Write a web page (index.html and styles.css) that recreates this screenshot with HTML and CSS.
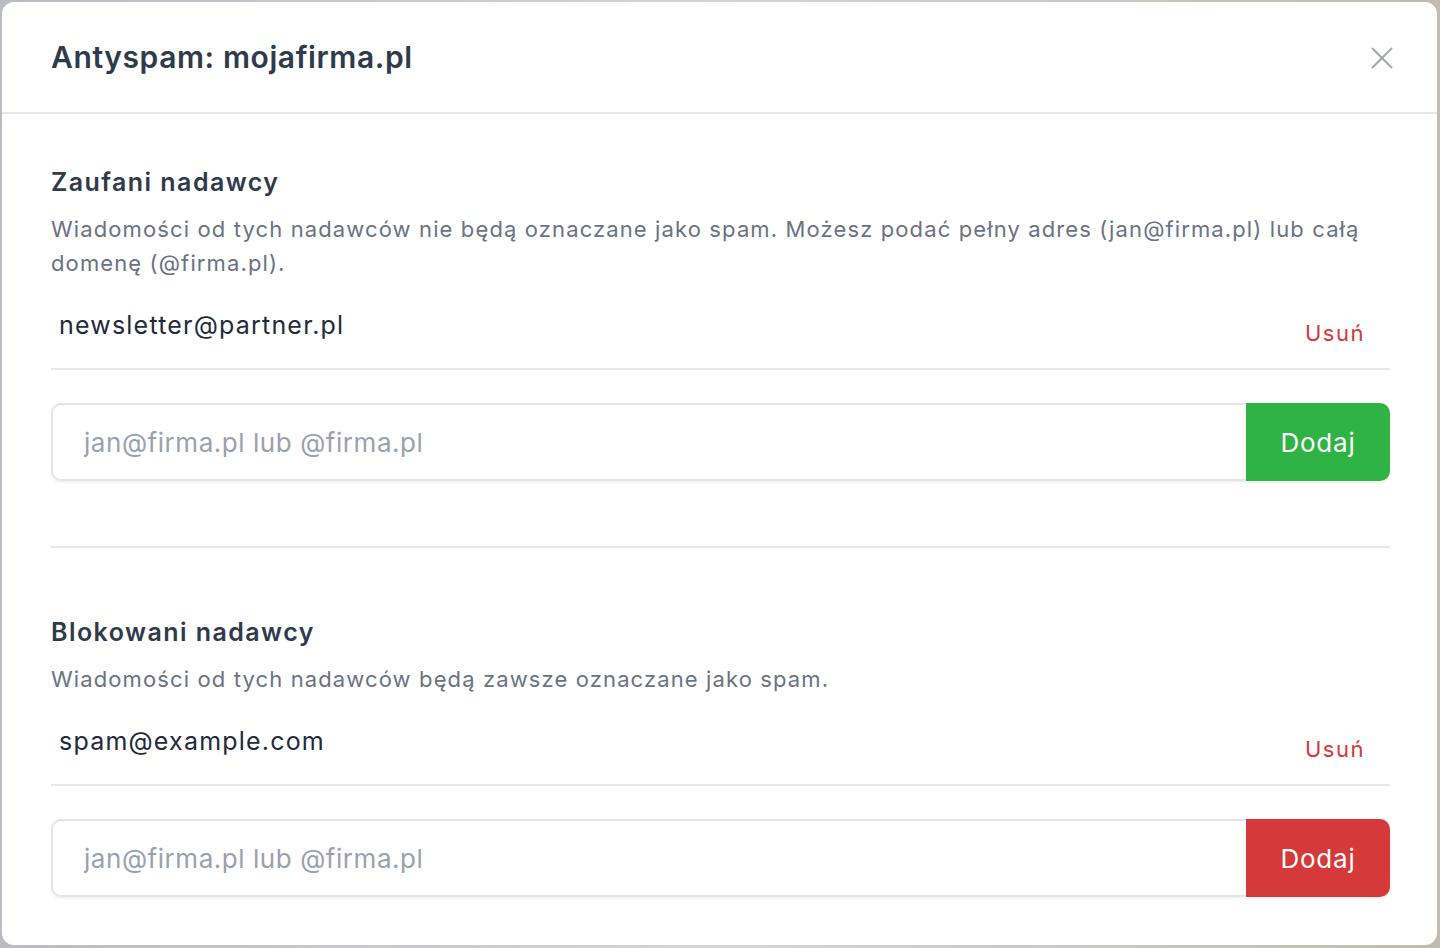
FILE: index.html
```html
<!DOCTYPE html>
<html lang="pl">
<head>
    <meta charset="UTF-8">
    <meta name="viewport" content="width=device-width, initial-scale=1.0">
    <title>Antyspam: mojafirma.pl</title>
    <link rel="stylesheet" href="styles.css">
</head>
<body>

    <div class="modal">
        <div class="modal-header">
            <h1 class="modal-title">Antyspam: mojafirma.pl</h1>
            <button class="btn-close" type="button" aria-label="Zamknij">
                <svg width="22" height="22" viewBox="0 0 22 22" fill="none" stroke="currentColor" stroke-width="2" stroke-linecap="round">
                    <path d="M1.5 1.5L20.5 20.5M20.5 1.5L1.5 20.5"/>
                </svg>
            </button>
        </div>

        <div class="modal-body">
            <!-- Zaufani -->
            <div class="section">
                <h2 class="section-title">Zaufani nadawcy</h2>
                <p class="section-desc">Wiadomości od tych nadawców nie będą oznaczane jako spam. Możesz podać pełny adres (jan@firma.pl) lub całą domenę (@firma.pl).</p>

                <div class="entry">
                    <span class="entry-address">newsletter@partner.pl</span>
                    <a href="#" class="entry-remove">Usuń</a>
                </div>

                <div class="add-row">
                    <input type="text" class="add-input" placeholder="jan@firma.pl lub @firma.pl">
                    <button type="button" class="add-btn add-btn-green">Dodaj</button>
                </div>
            </div>

            <!-- Blokowani -->
            <div class="section">
                <h2 class="section-title">Blokowani nadawcy</h2>
                <p class="section-desc">Wiadomości od tych nadawców będą zawsze oznaczane jako spam.</p>

                <div class="entry">
                    <span class="entry-address">spam@example.com</span>
                    <a href="#" class="entry-remove">Usuń</a>
                </div>

                <div class="add-row">
                    <input type="text" class="add-input" placeholder="jan@firma.pl lub @firma.pl">
                    <button type="button" class="add-btn add-btn-red">Dodaj</button>
                </div>
            </div>
        </div>
    </div>

</body>
</html>
```

FILE: styles.css
```css
body {
    font-family: Inter, "Noto Sans", sans-serif;
    margin: 0;
    padding: 2px 3px 3px 2px;
    height: 948px;
    box-sizing: border-box;
    background: linear-gradient(90deg, #b9bdc3, #d2d4d8 50%, #c0bcae);
    color: #1d273b;
}

.modal {
    background-color: #fff;
    border-radius: 12px;
    height: 100%;
    overflow: hidden;
}

.modal-header {
    display: flex;
    align-items: center;
    justify-content: space-between;
    height: 110px;
    padding: 0 44px 0 49px;
    border-bottom: 2px solid #e6e7ea;
}

.modal-title {
    margin: 0;
    font-size: 30px;
    font-weight: 600;
    letter-spacing: 0.6px;
    color: #2f3a4b;
}

.btn-close {
    border: 0;
    background: none;
    padding: 0;
    margin-top: 2px;
    color: #a2a6ae;
    display: flex;
    cursor: pointer;
}

.modal-body {
    padding: 0 47px 0 49px;
}

.section {
    padding: 51px 0 65px;
}

.section + .section {
    border-top: 2px solid #e6e7ea;
    padding-top: 67px;
}

.section-title {
    margin: 0;
    font-size: 25px;
    font-weight: 600;
    line-height: 34px;
    letter-spacing: 1.45px;
    color: #2f3a4b;
}

.section-desc {
    margin: 13px 0 0;
    font-size: 22px;
    line-height: 34px;
    letter-spacing: 1.12px;
    color: #6b7282;
}

.entry {
    display: flex;
    justify-content: space-between;
    align-items: flex-start;
    margin-top: 28px;
    padding: 0 25px 18px 8px;
    border-bottom: 2px solid #e6e7ea;
}

.entry-address {
    font-size: 25px;
    line-height: 34px;
    letter-spacing: 1.2px;
    color: #1f2a3c;
}

.entry-remove {
    margin-top: 8px;
    font-size: 22px;
    line-height: 34px;
    letter-spacing: 1.5px;
    color: #d63939;
    text-decoration: none;
}

.add-row {
    display: flex;
    margin-top: 33px;
    height: 78px;
    border-radius: 10px;
    box-shadow: 0 2px 2px rgba(30, 40, 60, 0.06);
}

.add-input {
    flex: 1;
    min-width: 0;
    font-family: inherit;
    font-size: 26px;
    letter-spacing: 0.55px;
    padding: 0 31px;
    border: 2px solid #e3e5e9;
    border-right: 0;
    border-radius: 10px 0 0 10px;
    outline: none;
    color: #1d273b;
}

.add-input::placeholder {
    color: #9aa1ad;
}

.add-btn {
    width: 144px;
    border: 0;
    border-radius: 0 10px 10px 0;
    font-family: inherit;
    font-size: 26px;
    font-weight: 400;
    letter-spacing: 0.8px;
    color: #fff;
    cursor: pointer;
}

.add-btn-green {
    background-color: #2fb344;
}

.add-btn-red {
    background-color: #d63939;
}
```
